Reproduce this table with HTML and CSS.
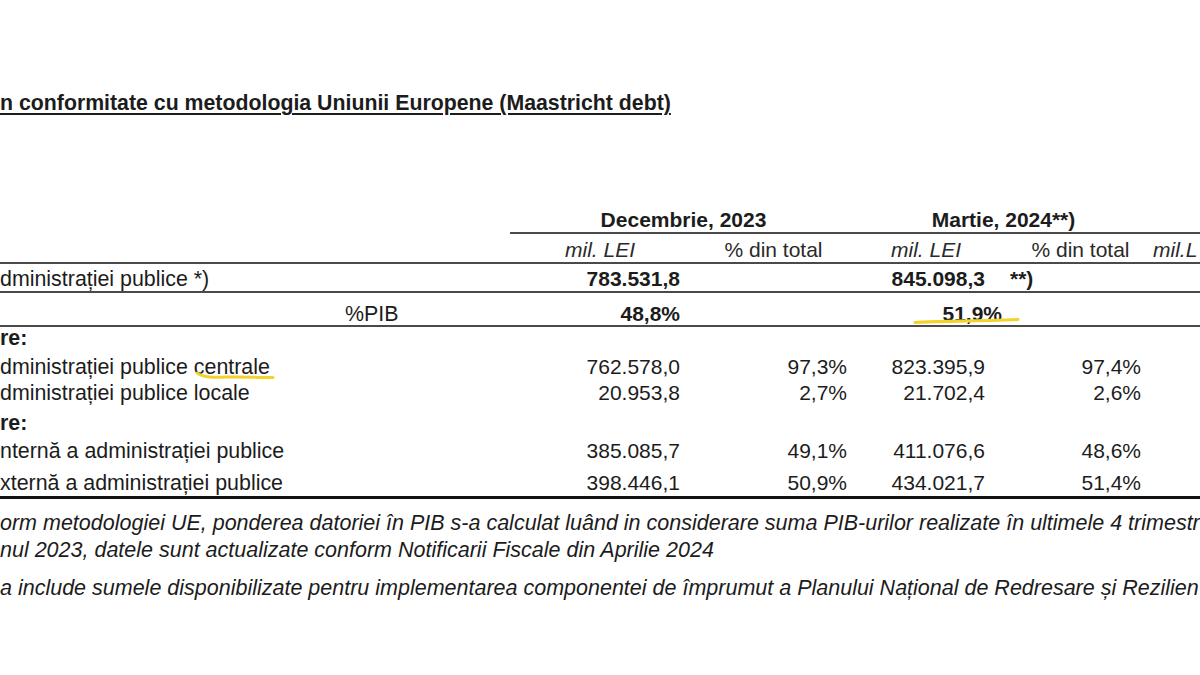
FILE: index.html
```html
<!DOCTYPE html>
<html lang="ro">
<head>
<meta charset="utf-8">
<title>Datoria administrației publice</title>
<link rel="stylesheet" href="styles.css">
</head>
<body>
<div class="page">
  <h1 class="title">n conformitate cu metodologia Uniunii Europene (Maastricht debt)</h1>

  <div class="table">
    <div class="row row-dates">
      <div class="cell label"></div>
      <div class="cell date span2 lined">Decembrie, 2023</div>
      <div class="cell date span2 lined">Martie, 2024**)</div>
      <div class="cell lined"></div>
    </div>

    <div class="row row-units lined">
      <div class="cell label"></div>
      <div class="cell unit c1"><i>mil. LEI</i></div>
      <div class="cell unit c2">% din total</div>
      <div class="cell unit c3"><i>mil. LEI</i></div>
      <div class="cell unit c4">% din total</div>
      <div class="cell unit c5"><i>mil.L</i></div>
    </div>

    <div class="row row-total lined">
      <div class="cell label">dministrației publice *)</div>
      <div class="cell num c1 b">783.531,8</div>
      <div class="cell num c2"></div>
      <div class="cell num c3 b">845.098,3</div>
      <div class="cell c4 b note-mark">**)</div>
      <div class="cell c5"></div>
    </div>

    <div class="row row-pib lined">
      <div class="cell label pib">%PIB</div>
      <div class="cell num c1 b">48,8%</div>
      <div class="cell num c2"></div>
      <div class="cell num c3 b tight"><span class="hl-wrap">51,9%<svg class="hl hl-pib" width="110" height="10" viewBox="0 0 110 10"><path d="M3 6.5 C 30 5, 60 5.5, 106 3.5" fill="none" stroke="#f4d22a" stroke-width="3.2" stroke-linecap="round"/></svg></span></div>
      <div class="cell c4"></div>
      <div class="cell c5"></div>
    </div>

    <div class="row row-sub">
      <div class="cell label b">re:</div>
    </div>

    <div class="row row-r1">
      <div class="cell label">dministrației publice <span class="hl-wrap">centrale<svg class="hl hl-central" width="82" height="12" viewBox="0 0 82 12"><path d="M3 3 C 10 8, 20 7.5, 35 7 C 50 6.5, 62 7.5, 79 7.5" fill="none" stroke="#f4d22a" stroke-width="3" stroke-linecap="round"/></svg></span></div>
      <div class="cell num c1">762.578,0</div>
      <div class="cell num c2">97,3%</div>
      <div class="cell num c3">823.395,9</div>
      <div class="cell num c4">97,4%</div>
      <div class="cell c5"></div>
    </div>

    <div class="row row-r2">
      <div class="cell label">dministrației publice locale</div>
      <div class="cell num c1">20.953,8</div>
      <div class="cell num c2">2,7%</div>
      <div class="cell num c3">21.702,4</div>
      <div class="cell num c4">2,6%</div>
      <div class="cell c5"></div>
    </div>

    <div class="row row-sub2">
      <div class="cell label b">re:</div>
    </div>

    <div class="row row-r3">
      <div class="cell label">nternă a administrației publice</div>
      <div class="cell num c1">385.085,7</div>
      <div class="cell num c2">49,1%</div>
      <div class="cell num c3">411.076,6</div>
      <div class="cell num c4">48,6%</div>
      <div class="cell c5"></div>
    </div>

    <div class="row row-r4 bottom">
      <div class="cell label">xternă a administrației publice</div>
      <div class="cell num c1">398.446,1</div>
      <div class="cell num c2">50,9%</div>
      <div class="cell num c3">434.021,7</div>
      <div class="cell num c4">51,4%</div>
      <div class="cell c5"></div>
    </div>
  </div>

  <div class="notes">
    <p class="note">orm metodologiei UE, ponderea datoriei în PIB s-a calculat luând in considerare suma PIB-urilor realizate în ultimele 4 trimestr<br>nul 2023, datele sunt actualizate conform Notificarii Fiscale din Aprilie 2024</p>
    <p class="note">a include sumele disponibilizate pentru implementarea componentei de împrumut a Planului Național de Redresare și Rezilien</p>
  </div>
</div>
</body>
</html>
```

FILE: styles.css
```css
html, body {
  margin: 0;
  padding: 0;
  background: #ffffff;
}

body {
  width: 1200px;
  height: 675px;
  overflow: hidden;
  font-family: "Liberation Sans", Arial, sans-serif;
  font-size: 21px;
  color: #1c1c1c;
}

.page {
  padding-top: 91px;
}

.title {
  margin: 0;
  font-size: 21.3px;
  font-weight: bold;
  line-height: 24px;
  white-space: nowrap;
  text-decoration: underline;
  text-decoration-thickness: 2px;
  text-underline-offset: 3px;
}

.table {
  margin-top: 93px;
}

.row {
  display: grid;
  grid-template-columns: 510px 180px 167px 148px 145px 50px;
  line-height: 24px;
  white-space: nowrap;
  box-sizing: border-box;
}

.lined {
  border-bottom: 2px solid #4a4a4a;
}

.bottom {
  border-bottom: 3px solid #111111;
}

.label {
  font-size: 21.4px;
}

.span2 {
  grid-column: span 2;
}

.b {
  font-weight: bold;
}

.date {
  text-align: center;
  font-weight: bold;
}

.unit {
  text-align: center;
  color: #2a2a2a;
}

.unit.c3 {
  padding-right: 10px;
}

.unit.c4 {
  padding-left: 6px;
}

.unit.c5 {
  text-align: left;
  padding-left: 3px;
}

.num {
  text-align: right;
}

.num.c1 { padding-right: 10px; }
.num.c2 { padding-right: 10px; }
.num.c3 { padding-right: 20px; }
.num.c4 { padding-right: 9px; }
.num.c3.tight { padding-right: 3px; }

.note-mark {
  padding-left: 5px;
}

.pib {
  padding-left: 345px;
}

/* row geometry */
.row-units { padding-top: 4px; height: 30px; }
.row-total { padding-top: 3px; height: 29px; }
.row-pib { padding-top: 9px; height: 34px; }
.row-sub { line-height: 22px; }
.row-r1 { padding-top: 6px; }
.row-r2 { line-height: 28px; }
.row-sub2 { line-height: 28px; padding-top: 2px; }
.row-r3 { line-height: 28px; }
.row-r4 { line-height: 26px; padding-top: 5px; }

/* highlighter marks over the scan */
.hl-wrap {
  position: relative;
}

.hl {
  position: absolute;
  pointer-events: none;
}

.hl-pib {
  left: -30px;
  top: 14px;
}

.hl-central {
  left: 0;
  top: 15px;
}

.notes {
  margin-top: 11px;
}

.note {
  margin: 0 0 11px 0;
  font-family: "Liberation Sans", Arial, sans-serif;
  font-style: italic;
  font-size: 21.5px;
  line-height: 27px;
  white-space: nowrap;
  color: #1c1c1c;
}
```
